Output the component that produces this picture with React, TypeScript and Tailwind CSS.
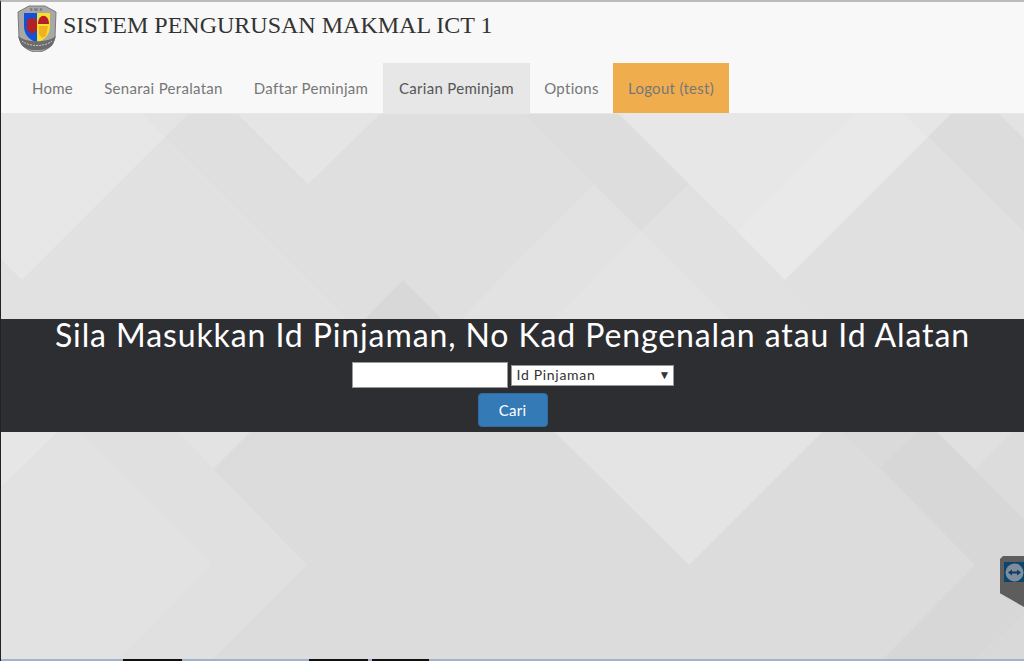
import React from 'react';

const navItems: [string, string][] = [
  ['Home', 'w-[71px]'],
  ['Senarai Peralatan', 'w-[151px]'],
  ['Daftar Peminjam', 'w-[144px]'],
  ['Carian Peminjam', 'w-[147px] bg-[#e7e7e7] text-[#555]'],
  ['Options', 'w-[83px]'],
  ['Logout (test)', 'w-[116px] bg-[#f0ad4e]'],
];

// background shards, in page coordinates
const shards: [string, string][] = [
  ['1,114 188,114 22,280 1,259', '#e7e7e7'],
  ['143,114 188,114 165,137', '#e4e4e4'],
  ['188,114 238,114 308,184 380,114 524,114 641,231 594,185 512,266 462,319 442,319 403,280 365,319 347,319 165,137', '#dfdfdf'],
  ['238,114 380,114 308,184', '#e5e5e5'],
  ['403,280 442,319 365,319', '#d8d8d8'],
  ['524,114 619,114 689,184 641,231', '#dddddd'],
  ['594,185 641,231 555,319 462,319 512,266', '#e2e2e2'],
  ['641,231 729,319 555,319', '#e4e4e4'],
  ['641,231 689,184 785,280 824,319 729,319', '#e1e1e1'],
  ['619,114 855,114 737,231 689,184', '#e7e7e7'],
  ['855,114 904,114 928,137 785,280 737,231', '#e9e9e9'],
  ['904,114 951,114 928,137', '#e6e6e6'],
  ['951,114 999,114 1024,138 1024,232 928,137', '#dcdcdc'],
  ['999,114 1024,114 1024,138', '#e3e3e3'],
  ['785,280 928,137 1024,232 1024,319 824,319', '#e0e0e0'],
  ['1,319 1024,319 1024,659 1,659', '#dcdcdc'],
  ['1,432 58,432 1,488', '#e6e6e6'],
  ['58,432 82,432 213,565 120,659 1,659 1,488', '#e2e2e2'],
  ['82,432 177,432 213,469 307,565 213,659 120,659 213,565', '#e0e0e0'],
  ['177,432 250,432 213,469', '#e3e3e3'],
  ['555,432 822,432 689,565', '#e4e4e4'],
  ['842,432 917,432 880,468', '#dadada'],
  ['880,468 917,432 937,432 1024,519 1024,613 977,659 883,659 975,565', '#d7d7d7'],
  ['937,432 1012,432 975,469', '#e0e0e0'],
  ['1012,432 1024,432 1024,420 975,469', '#d9d9d9'],
  ['977,659 1024,613 1024,659', '#d9d9d9'],
];

const taskbar: [string, string][] = [
  ['w-[122px]', 'bg-[#9fb3cf]'],
  ['w-[59px]', 'bg-[#111]'],
  ['w-[127px]', 'bg-[#9fb3cf]'],
  ['w-[59px]', 'bg-[#111]'],
  ['w-[4px]', 'bg-[#9fb3cf]'],
  ['w-[57px]', 'bg-[#111]'],
  ['flex-1', 'bg-[#9fb3cf]'],
];

function Crest() {
  return (
    <svg width="40" height="47" viewBox="0 0 40 47" className="shrink-0">
      <path d="M1 7 L12 1 H28 L39 7 L38 32 C37 41 28 47 20 47 C12 47 3 41 2 32 Z" fill="#a8a8a8" stroke="#7a7a7a" strokeWidth="1" />
      <text x="20" y="6" textAnchor="middle" fontSize="4" letterSpacing="2" fill="#444" fontFamily="Liberation Sans, sans-serif">SMK</text>
      <path d="M7 8 H20 V37 C13 36 7 30 7 21 Z" fill="#1550d8" />
      <path d="M20 8 H33 V21 C33 30 27 36 20 37 Z" fill="#f7e02c" />
      <path d="M10 16 L13 13 H17 L20 16 V25 L15 29 L10 25 Z" fill="#b3202a" />
      <path d="M21 19 C21 8 32 8 32 19 Z" fill="#b3202a" />
      <path d="M22 21 H31 L29 31 L25 33 L22 29 Z" fill="#f0b020" />
      <path d="M1 31 C9 38 31 38 39 31 L36 39 C32 47 8 47 4 39 Z" fill="#6b6b6b" />
      <path d="M5 36 C12 42 28 42 35 36" fill="none" stroke="#c8c8c8" strokeWidth="1" strokeDasharray="2 1" />
    </svg>
  );
}

function Background() {
  return (
    <svg className="absolute inset-0 w-full h-full" viewBox="1 114 1023 545" preserveAspectRatio="none">
      <rect x="1" y="114" width="1023" height="205" fill="#e1e1e1" />
      {shards.map(([points, fill]) => (
        <polygon key={points} points={points} fill={fill} />
      ))}
    </svg>
  );
}

export default function App() {
  return (
    <div className="w-[1024px] h-[661px] overflow-hidden flex flex-col bg-[#e5e5e5] border-l border-l-[#222] border-t-2 border-t-[#bbb] font-['Liberation_Sans',sans-serif]">
      <header className="h-[112px] bg-[#f8f8f8] border-b border-b-[#e7e7e7] shrink-0 flex flex-col">
        <div className="h-[61px] flex pl-[16px] pt-[3px] gap-[6px]">
          <Crest />
          <h1 className="font-['Liberation_Serif',serif] text-[24px] leading-[40px] text-[#333]">SISTEM PENGURUSAN MAKMAL ICT 1</h1>
        </div>
        <nav className="flex h-[50px] pl-[16px] text-[15px] tracking-[0.3px] text-[#777] font-['Lato',sans-serif]">
          {navItems.map(([item, cls]) => (
            <a key={item} className={`flex items-center justify-center ${cls}`}>
              {item}
            </a>
          ))}
        </nav>
      </header>
      <main className="relative flex-1 flex flex-col">
        <Background />
        <div className="relative mt-[205px] h-[113px] bg-[#2d2e32] text-white text-center flex flex-col items-center font-['Lato',sans-serif]">
          <h2 className="text-[32px] tracking-[0.9px] leading-[31px] whitespace-nowrap">Sila Masukkan Id Pinjaman, No Kad Pengenalan atau Id Alatan</h2>
          <form className="flex items-center gap-[3px] mt-[12px]">
            <input type="text" className="w-[156px] h-[26px] bg-white border border-[#999]" />
            <div className="w-[163px] h-[21px] bg-white border border-[#999] text-[#333] text-[14px] tracking-[0.7px] leading-[17px] text-left pl-[5px] pr-[2px] flex justify-between">
              <span>Id Pinjaman</span>
              <span className="text-[12px] tracking-normal">▼</span>
            </div>
          </form>
          <button className="mt-[5px] w-[70px] h-[34px] bg-[#337ab7] border border-[#2e6da4] rounded text-[15px] tracking-[0.3px] text-white">Cari</button>
        </div>
        <div className="absolute right-0 top-[442px] w-[24px] h-[51px] bg-[#5d5d5d] [clip-path:polygon(3px_0,100%_0,100%_100%,0_73%,0_3px)] pt-[6px] pl-[4px]">
          <div className="w-[20px] h-[20px] bg-[#0a4570] flex items-center justify-center">
            <svg width="19" height="19" viewBox="0 0 19 19">
              <circle cx="9.5" cy="9.5" r="9" fill="#7f8d9b" />
              <path d="M3 9.5 L7 6.5 V8.5 H12 V6.5 L16 9.5 L12 12.5 V10.5 H7 V12.5 Z" fill="#123a6b" />
            </svg>
          </div>
        </div>
      </main>
      <div className="h-[2px] shrink-0 flex">
        {taskbar.map(([width, color], i) => (
          <div key={i} className={`${width} ${color}`} />
        ))}
      </div>
    </div>
  );
}
